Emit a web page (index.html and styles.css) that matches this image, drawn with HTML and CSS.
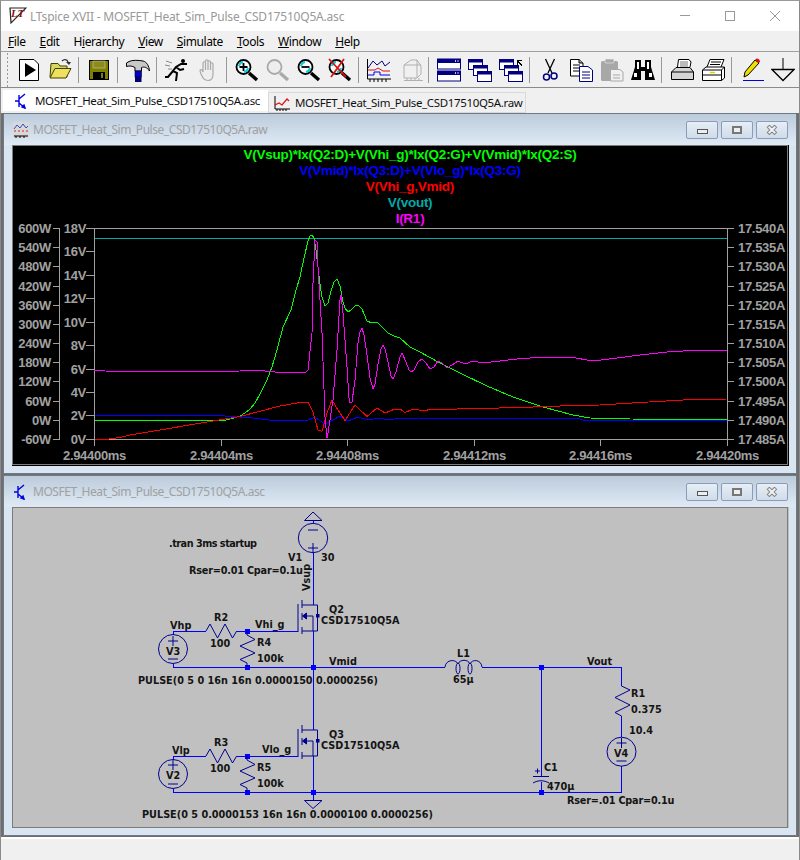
FILE: index.html
```html
<!DOCTYPE html>
<html lang="en">

    <head>
        <meta charset="UTF-8">
        <meta name="viewport" content="width=device-width, initial-scale=1.0">
        <title>LTspice XVII</title>
        <link rel="stylesheet" href="styles.css">
    </head>

    <body>
        <svg class="defs" width="0" height="0">
            <defs>
                <g id="ico-trans" fill="none" stroke="#0000e0" stroke-width="1.4">
                    <path d="M5 2V14M1 8H5M5 6L11 1M5 10L11 15"/>
                    <path d="M11 15L8 14L10 12Z" fill="#0000e0"/>
                </g>
                <g id="ico-wave">
                    <rect x="0" y="0" width="16" height="16" fill="#d8d8d8"/>
                    <path d="M1 7L4 3L7 6L10 2L13 6L15 4" fill="none" stroke="#3050c0"/>
                    <path d="M1 9H15" stroke="#e02020" stroke-dasharray="2 2"/>
                    <path d="M1 14H15M3 14V16M7 14V16M11 14V16" stroke="#000"/>
                </g>
                <g id="glass">
                    <path d="M14 15L22 22" stroke="#000" stroke-width="3.4" fill="none"/>
                    <circle cx="8.5" cy="9" r="7" fill="#fff" stroke="#000" stroke-width="1.8"/>
                    <path d="M4 8A5 5 0 0 1 8 4" stroke="#00d0e0" stroke-width="2" fill="none"/>
                    <path d="M13 10A5 5 0 0 1 9 14" stroke="#00d0e0" stroke-width="2" fill="none"/>
                </g>
                <g id="mini-win">
                    <rect x="0.5" y="0.5" width="14" height="10" fill="#fff" stroke="#000080"/>
                    <rect x="0.5" y="0.5" width="14" height="3" fill="#000080"/>
                </g>
                <g id="nmos" fill="none" stroke="#000090">
                    <path d="M298 604V632"/>
                    <path d="M302 600V608M302 613V620M302 627V634"/>
                    <path d="M302 605H317.5V631H302"/>
                    <path d="M306 616H313V631"/>
                    <path d="M302.5 616L306.5 613V619Z" fill="#000090"/>
                    <rect x="316.5" y="614.5" width="2.5" height="2.5" fill="#000090"/>
                </g>
                <path id="res-h" d="M206 631L210 624L217.500 638L225 624L232.500 638L236.700 631"/>
                <path id="res-v" d="M247 631V635L255 639.500L240 646L255 653L240 659.500L247 663V667"/>
            </defs>
        </svg>

        <div class="app">
            <div class="titlebar">
                <svg class="app-logo" width="18" height="18" viewBox="0 0 18 18">
                    <path d="M1 1L17 1L2 16Z" fill="#fff" stroke="#222" stroke-width="1.2"/>
                    <text class="logo-text" x="2" y="10">LT</text>
                </svg>
                <span class="app-title">LTspice XVII - MOSFET_Heat_Sim_Pulse_CSD17510Q5A.asc</span>
                <div class="win-ctrl">
                    <svg width="12" height="12" viewBox="0 0 12 12"><path d="M1 5.500H11" stroke="#999"/></svg>
                    <svg width="12" height="12" viewBox="0 0 12 12"><rect x="1.500" y="1.500" width="9" height="9" fill="none" stroke="#999"/></svg>
                    <svg width="12" height="12" viewBox="0 0 12 12"><path d="M1 1L11 11M11 1L1 11" stroke="#999"/></svg>
                </div>
            </div>

            <nav class="menubar">
                <span><u>F</u>ile</span>
                <span><u>E</u>dit</span>
                <span>H<u>i</u>erarchy</span>
                <span><u>V</u>iew</span>
                <span><u>S</u>imulate</span>
                <span><u>T</u>ools</span>
                <span><u>W</u>indow</span>
                <span><u>H</u>elp</span>
            </nav>

            <div class="toolbar">
                <div class="tool-group">
                    <!-- run file -->
                    <svg class="tool" viewBox="0 0 24 24">
                        <path d="M2.500 1.500H17L21.500 6V22.500H2.500Z" fill="#fff" stroke="#000"/>
                        <path d="M8 5L19 12L8 19Z" fill="#000"/>
                    </svg>
                    <!-- open -->
                    <svg class="tool" viewBox="0 0 24 24">
                        <path d="M3 5.500H10L12 8H19V19H2Z" fill="#d8d860" stroke="#404000"/>
                        <path d="M2 20L7 10.500H23L18 20Z" fill="#f0e060" stroke="#404000"/>
                        <path d="M14 3C16 1 19 1 20 4" fill="none" stroke="#333" stroke-width="1.400"/>
                        <path d="M18 4H23L21 7Z" fill="#333"/>
                    </svg>
                </div>
                <i class="sep"></i>
                <div class="tool-group">
                    <!-- save -->
                    <svg class="tool" viewBox="0 0 24 24">
                        <rect x="2.500" y="2.500" width="19" height="19" fill="#808000" stroke="#000"/>
                        <rect x="6" y="3" width="12" height="7" fill="#8c8c1e" stroke="#c8c8a0" stroke-width="0.600"/>
                        <rect x="6" y="14" width="12" height="7" fill="#000"/>
                        <rect x="14" y="15" width="2" height="5" fill="#808000"/>
                    </svg>
                </div>
                <i class="sep"></i>
                <div class="tool-group">
                    <!-- hammer -->
                    <svg class="tool" viewBox="0 0 24 24">
                        <path d="M0.500 5L3 3.500C6 2 12 2 17 3C21 4 23 8 23.500 13C21 9 18 8.500 15.500 9.500V13H9V9.500C6 8 4 7.500 0.500 8.500Z" fill="#c8c8c8" stroke="#000"/>
                        <rect x="9" y="13" width="6.500" height="6" fill="#0000d0" stroke="#000" stroke-width="0.600"/>
                        <rect x="9" y="19" width="6.500" height="5" fill="#000070"/>
                    </svg>
                </div>
                <i class="sep"></i>
                <div class="tool-group">
                    <!-- run -->
                    <svg class="tool" viewBox="0 0 24 24">
                        <path d="M1 3L7 5M0 7L5 8M3 11L7 11" stroke="#888" fill="none"/>
                        <circle cx="18" cy="3" r="2" fill="#000"/>
                        <path d="M22 6L16 6L11 9L8 13L12 15L11 23M11 9L15 12L19 11M8 13L3 19H0" fill="none" stroke="#000" stroke-width="2"/>
                    </svg>
                    <!-- halt, greyed out -->
                    <svg class="tool" viewBox="0 0 24 24">
                        <path d="M7 14V5A1.200 1.200 0 0 1 9.500 5V12M9.500 4V3A1.200 1.200 0 0 1 12 3V12M12 4A1.200 1.200 0 0 1 14.500 4V12M14.500 6A1.200 1.200 0 0 1 17 6V16C17 20 15 22.500 12 22.500C8 22.500 7 20 5 16L4 13C4 11 6 11 7 14" fill="#eee" stroke="#aaa" stroke-width="1.200"/>
                    </svg>
                </div>
                <i class="sep"></i>
                <div class="tool-group">
                    <!-- zoom in -->
                    <svg class="tool" viewBox="0 0 24 24">
                        <use href="#glass"/>
                        <path d="M4.500 9H12.500M8.500 5V13" stroke="#000" stroke-width="1.800"/>
                    </svg>
                    <!-- zoom greyed -->
                    <svg class="tool tool-off" viewBox="0 0 24 24">
                        <path d="M14 15L22 22" stroke="#aaa" stroke-width="3.400"/>
                        <circle cx="8.500" cy="9" r="7" fill="#eee" stroke="#aaa" stroke-width="1.800"/>
                    </svg>
                    <!-- zoom out -->
                    <svg class="tool" viewBox="0 0 24 24">
                        <use href="#glass"/>
                        <path d="M4.500 9H12.500" stroke="#000" stroke-width="1.800"/>
                    </svg>
                    <!-- zoom cancel -->
                    <svg class="tool" viewBox="0 0 24 24">
                        <use href="#glass"/>
                        <path d="M1 1L18 19M16 1L3 19" stroke="#e01010" stroke-width="1.800"/>
                    </svg>
                </div>
                <i class="sep"></i>
                <div class="tool-group">
                    <!-- waveform -->
                    <svg class="tool" viewBox="0 0 24 24">
                        <path d="M0.500 1V21H24M3 21V24M7 21V24M11 21V24M15 21V24M19 21V24" fill="none" stroke="#000"/>
                        <path d="M1 10L6 3L10 7L15 3L18 8L23 4" fill="none" stroke="#000080"/>
                        <path d="M1 12H8L11 10L16 13H23" fill="none" stroke="#e01010"/>
                        <path d="M1 17H7V14H13V17H23" fill="none" stroke="#0000e0"/>
                    </svg>
                    <!-- 3d box greyed -->
                    <svg class="tool tool-shift" viewBox="0 0 24 24">
                        <path d="M3 7L10 2H16L20 8V16L16 20H3ZM16 2V20M3 7H20" fill="#f0f0f0" stroke="#b0b0b0"/>
                        <path d="M3 22.500H22M6 20V23M10 20V23M14 20V23M18 20V23" fill="none" stroke="#b0b0b0"/>
                    </svg>
                </div>
                <i class="sep"></i>
                <div class="tool-group">
                    <!-- tile -->
                    <svg class="tool" viewBox="0 0 24 24">
                        <rect x="0.500" y="1" width="23" height="10" fill="#fff" stroke="#000080"/>
                        <rect x="0.500" y="1" width="23" height="4" fill="#000080"/>
                        <rect x="0.500" y="13" width="23" height="10" fill="#fff" stroke="#000080"/>
                        <rect x="0.500" y="13" width="23" height="4" fill="#000080"/>
                        <path d="M18 3H19M20.500 3H21.500M18 15H19M20.500 15H21.500" stroke="#fff" stroke-width="1.500"/>
                    </svg>
                    <!-- cascade -->
                    <svg class="tool" viewBox="0 0 24 24">
                        <use href="#mini-win" x="0" y="1"/>
                        <use href="#mini-win" x="5" y="7"/>
                        <use href="#mini-win" x="9" y="13"/>
                    </svg>
                    <!-- cascade, arrow -->
                    <svg class="tool" viewBox="0 0 24 24">
                        <use href="#mini-win" x="0" y="1"/>
                        <use href="#mini-win" x="5" y="7"/>
                        <use href="#mini-win" x="9" y="13"/>
                        <path d="M18 2H23V3H20V4H21V5H22V6H23V8H22V7H21V6H20V5H19V8H18Z" fill="#000"/>
                    </svg>
                </div>
                <i class="sep"></i>
                <div class="tool-group">
                    <!-- cut -->
                    <svg class="tool" viewBox="0 0 24 24">
                        <path d="M7.500 1L14 15M16.500 1L10 15" stroke="#000" stroke-width="1.300" fill="none"/>
                        <circle cx="8.500" cy="19" r="3" fill="none" stroke="#000080" stroke-width="1.500"/>
                        <circle cx="16" cy="18" r="3" fill="none" stroke="#000080" stroke-width="1.500"/>
                    </svg>
                    <!-- copy -->
                    <svg class="tool" viewBox="0 0 24 24">
                        <path d="M1.500 1.500H10L14 5V18H1.500Z" fill="#fff" stroke="#000"/>
                        <path d="M10 1.500V5H14" fill="#aaa" stroke="#000"/>
                        <path d="M4 7H11M4 10H11M4 13H11" stroke="#000"/>
                        <path d="M10.500 8.500H19L23.500 12V23.500H10.500Z" fill="#fff" stroke="#000080"/>
                        <path d="M13 14H21M13 17H21M13 20H21" stroke="#000080"/>
                    </svg>
                    <!-- paste greyed -->
                    <svg class="tool" viewBox="0 0 24 24">
                        <rect x="1" y="3" width="17" height="20" rx="1.500" fill="#a8a8a8"/>
                        <rect x="5" y="1" width="9" height="4" rx="1" fill="#a8a8a8" stroke="#eee" stroke-width="0.600"/>
                        <path d="M10.500 11.500H20L23 14V23H10.500Z" fill="#f0f0f0" stroke="#a8a8a8"/>
                        <path d="M13 17H20M13 20H20" stroke="#a8a8a8"/>
                    </svg>
                    <!-- find -->
                    <svg class="tool" viewBox="0 0 24 24">
                        <path d="M4 2H10V9H14V2H20V9L24 22H14V13H10V22H0L4 9Z" fill="#000"/>
                        <path d="M6 4H8V11H6ZM16 4H18V11H16ZM3 15H6V19H3ZM18 15H21V19H18Z" fill="#fff"/>
                    </svg>
                </div>
                <i class="sep"></i>
                <div class="tool-group">
                    <!-- print preview -->
                    <svg class="tool" viewBox="0 0 24 24">
                        <path d="M7.500 9L8.500 1.500H19L21 4L20 9" fill="#fff" stroke="#000"/>
                        <path d="M1.500 14L6 9.500H20L23.500 14V21.500H1.500Z" fill="#d4d4d4" stroke="#000"/>
                        <path d="M10 3H18V9H10Z" fill="#bbb"/>
                        <path d="M1.500 14H23.500" stroke="#000"/>
                    </svg>
                    <!-- print -->
                    <svg class="tool" viewBox="0 0 24 24">
                        <path d="M6 9L9 1.500H23L20 9" fill="#fff" stroke="#000"/>
                        <path d="M10 4H20M9 6.500H19" stroke="#000"/>
                        <path d="M1.500 12L5 9H23.500V20L20.500 22.500H1.500Z" fill="#fff" stroke="#000"/>
                        <path d="M1.500 12H20.500V22.500M20.500 12L23.500 9M1.500 17H20.500" fill="none" stroke="#000"/>
                        <path d="M9 14.500H14" stroke="#e0d000" stroke-width="1.500"/>
                    </svg>
                </div>
                <i class="sep"></i>
                <div class="tool-group">
                    <!-- pencil -->
                    <svg class="tool" viewBox="0 0 24 24">
                        <path d="M4 19L5 14L15 2L19 5L8 17Z" fill="#f0e000" stroke="#000"/>
                        <path d="M15 2L16.500 0.500C18 0 20 2 20 3.500L19 5Z" fill="#e01010"/>
                        <path d="M3 22.500H24" stroke="#0000e0"/>
                    </svg>
                    <!-- ground -->
                    <svg class="tool" viewBox="0 0 24 24">
                        <path d="M12 0V11" stroke="#000"/>
                        <path d="M1 11.500H23L12 22.500Z" fill="none" stroke="#000" stroke-width="1.300"/>
                    </svg>
                </div>
            </div>

            <div class="tabs">
                <div class="tab tab-active">
                    <svg width="16" height="16" viewBox="0 0 16 16"><use href="#ico-trans"/></svg>
                    <span>MOSFET_Heat_Sim_Pulse_CSD17510Q5A.asc</span>
                </div>
                <div class="tab">
                    <svg width="16" height="16" viewBox="0 0 16 16">
                        <path d="M1 1V14H16M3 14V16M6 14V16M9 14V16M12 14V16" fill="none" stroke="#000"/>
                        <path d="M1 10L5 8L8 10L13 4L15 6" fill="none" stroke="#e01010" stroke-width="1.200"/>
                    </svg>
                    <span>MOSFET_Heat_Sim_Pulse_CSD17510Q5A.raw</span>
                </div>
            </div>

            <main class="mdi">
                <section class="child">
                    <header class="child-head">
                        <svg width="16" height="16" viewBox="0 0 16 16"><use href="#ico-wave"/></svg>
                        <span class="child-title">MOSFET_Heat_Sim_Pulse_CSD17510Q5A.raw</span>
                        <div class="child-btns">
                            <button class="cbtn"><i class="g-min"></i></button>
                            <button class="cbtn"><i class="g-max"></i></button>
                            <button class="cbtn cbtn-x">&#10006;</button>
                        </div>
                    </header>
                    <div class="child-body plot-body">
                        <svg class="canvas" width="776" height="320" viewBox="12 145 776 320">
                            <g class="trace-heads">
                                <text class="t-green" x="410" y="159">V(Vsup)*Ix(Q2:D)+V(Vhi_g)*Ix(Q2:G)+V(Vmid)*Ix(Q2:S)</text>
                                <text class="t-blue" x="410" y="175">V(Vmid)*Ix(Q3:D)+V(Vlo_g)*Ix(Q3:G)</text>
                                <text class="t-red" x="410" y="191">V(Vhi_g,Vmid)</text>
                                <text class="t-teal" x="410" y="207">V(vout)</text>
                                <text class="t-magenta" x="410" y="223">I(R1)</text>
                            </g>

                            <path class="axis" d="M94.500 228H727.500V439.500H94.500Z"/>
                            <path class="axis" d="M59.500 228V439.500M53 228H59.500M53 247.500H59.500M53 266.500H59.500M53 286.500H59.500M53 305.500H59.500M53 324.500H59.500M53 343.500H59.500M53 362.500H59.500M53 381.500H59.500M53 401.500H59.500M53 420.500H59.500M53 439.500H59.500"/>
                            <path class="axis" d="M86 228H94M86 251.500H94M86 275.500H94M86 298.500H94M86 322.500H94M86 345.500H94M86 369.500H94M86 392.500H94M86 415.500H94M86 439.500H94"/>
                            <path class="axis" d="M727 247.500H734M727 228H734M727 266.500H734M727 286.500H734M727 305.500H734M727 324.500H734M727 343.500H734M727 362.500H734M727 381.500H734M727 401.500H734M727 420.500H734M727 439.500H734"/>
                            <path class="axis" d="M94.500 439V446M221.500 439V446M347.500 439V446M474.500 439V446M600.500 439V446M727.500 439V446"/>

                            <g class="axis-label lbl-end">
                                <text x="51" y="233">600W</text>
                                <text x="51" y="252">540W</text>
                                <text x="51" y="271">480W</text>
                                <text x="51" y="291">420W</text>
                                <text x="51" y="310">360W</text>
                                <text x="51" y="329">300W</text>
                                <text x="51" y="348">240W</text>
                                <text x="51" y="367">180W</text>
                                <text x="51" y="386">120W</text>
                                <text x="51" y="406">60W</text>
                                <text x="51" y="425">0W</text>
                                <text x="51" y="444">-60W</text>
                                <text x="86" y="233">18V</text>
                                <text x="86" y="256">16V</text>
                                <text x="86" y="280">14V</text>
                                <text x="86" y="303">12V</text>
                                <text x="86" y="327">10V</text>
                                <text x="86" y="350">8V</text>
                                <text x="86" y="374">6V</text>
                                <text x="86" y="397">4V</text>
                                <text x="86" y="420">2V</text>
                                <text x="86" y="444">0V</text>
                            </g>
                            <g class="axis-label">
                                <text x="738" y="233">17.540A</text>
                                <text x="738" y="252">17.535A</text>
                                <text x="738" y="271">17.530A</text>
                                <text x="738" y="291">17.525A</text>
                                <text x="738" y="310">17.520A</text>
                                <text x="738" y="329">17.515A</text>
                                <text x="738" y="348">17.510A</text>
                                <text x="738" y="367">17.505A</text>
                                <text x="738" y="386">17.500A</text>
                                <text x="738" y="406">17.495A</text>
                                <text x="738" y="425">17.490A</text>
                                <text x="738" y="444">17.485A</text>
                            </g>
                            <g class="axis-label lbl-mid">
                                <text x="94.500" y="460">2.94400ms</text>
                                <text x="221.500" y="460">2.94404ms</text>
                                <text x="347.500" y="460">2.94408ms</text>
                                <text x="474.500" y="460">2.94412ms</text>
                                <text x="600.500" y="460">2.94416ms</text>
                                <text x="727.500" y="460">2.94420ms</text>
                            </g>

                            <path class="trace" stroke="#00aaaa" d="M94.500 238.500H727"/>
                            <polyline class="trace" stroke="#0000ff" points="94.500,415.500 217,415.500 240,417 253,418 273,420.500 307,420.500 315,417 320,421 325,424 333,420 340,416 348,421 358,417 368,420 380,418 388,420 400,418 407,419 418,418 440,418.500 580,419 585,420.500 727,420.500"/>
                            <polyline class="trace" stroke="#00ff00" points="94.500,420.500 224,420.500 232,418.500 240,416 245,413 250,409 255,403 260,394 267,380 272,367 277,350 283,327 291,310 296,290 300,277 304,258 308,241 310,236 312,235 314,238 316,250 318,267 320,284 322,297 325,306 328,303 331,291 334,282 337,279 340,286 343,302 345,308 348,312 351,310 355,306 358,305 362,309 367,321 372,323 377,322 382,327 388,333 394,336 400,338 410,347 420,352 440,363 460,373 487,386 513,397 543,407 573,415 590,418 630,419 727,419.500"/>
                            <polyline class="trace" stroke="#ff0000" points="94.500,439.500 105,439.500 120,437.500 130,435 240,416.500 280,406 300,402.500 308,402 313,412 318,430 322,431.500 327,413 332,400 338,410 345,420.500 355,405 367,416.500 377,408 385,413 395,409 400,409 405,412.500 413,409 425,411 430,409 443,410 457,409 520,407.500 560,406 600,405 640,402.500 683,400 727,399"/>
                            <polyline class="trace" stroke="#ff00ff" points="94.500,370.500 105,371 165,372 240,371 260,370.500 275,372 305,373 308,370 312,333 313,283 315,240 317,242 318,267 320,300 322,333 325,417 327,438 328,433 333,400 337,350 340,300 341,295 343,313 347,367 349,398 350,403 352,402 355,380 358,343 360,332 362,328 364,335 367,355 370,378 373,389 375,384 378,364 381,349 383,345 385,349 388,362 391,376 393,379 396,372 400,357 402,353 406,362 409,370 411,372 414,370 418,362 422,359 426,363 430,369 434,367 438,361 442,363 447,368 452,365 458,361 465,364 473,361 483,363 500,361 517,359 543,357 570,357 593,361 617,358 640,355 667,352 700,350 727,350"/>
                        </svg>
                    </div>
                </section>

                <section class="child">
                    <header class="child-head">
                        <svg width="16" height="16" viewBox="0 0 16 16"><use href="#ico-trans"/></svg>
                        <span class="child-title">MOSFET_Heat_Sim_Pulse_CSD17510Q5A.asc</span>
                        <div class="child-btns">
                            <button class="cbtn"><i class="g-min"></i></button>
                            <button class="cbtn"><i class="g-max"></i></button>
                            <button class="cbtn cbtn-x">&#10006;</button>
                        </div>
                    </header>
                    <div class="child-body sch-body">
                        <svg class="canvas" width="776" height="321" viewBox="12 507 776 321">
                            <!-- wires -->
                            <g class="wire">
                                <path d="M313 553V605M313 631V730M313 756V792M313 520V523"/>
                                <path d="M173 634.500V631H206M236.700 631H298"/>
                                <path d="M173 664V667H445M482 667H621.500V686"/>
                                <path d="M173 759.500V756H206M236.700 756H298"/>
                                <path d="M173 789V792H621.500V766"/>
                                <path d="M541.500 667V776M541.500 782V792"/>
                                <path d="M621.500 716V737"/>
                                <path d="M313 792V800"/>
                            </g>
                            <g class="wire-dots">
                                <rect x="245" y="629" width="5" height="5"/>
                                <rect x="245" y="665" width="5" height="5"/>
                                <rect x="311" y="665" width="5" height="5"/>
                                <rect x="245" y="754" width="5" height="5"/>
                                <rect x="245" y="790" width="5" height="5"/>
                                <rect x="311" y="790" width="5" height="5"/>
                                <rect x="539" y="665" width="5" height="5"/>
                                <rect x="539" y="790" width="5" height="5"/>
                            </g>

                            <!-- parts -->
                            <g class="part">
                                <path d="M304.500 520.500H322L313 512Z"/>
                                <circle cx="313" cy="538" r="14.700"/>
                                <path d="M308 530H318M308 548H318M313 543V553"/>

                                <use href="#nmos"/>
                                <use href="#nmos" y="125"/>

                                <use href="#res-h"/>
                                <use href="#res-h" y="125"/>
                                <use href="#res-v"/>
                                <use href="#res-v" y="125"/>

                                <circle cx="173" cy="649" r="14.500"/>
                                <path d="M168 641H178M173 636V646M168 659H178"/>
                                <circle cx="173" cy="774" r="14.500"/>
                                <path d="M168 765H178M173 760V770M168 784H178"/>
                                <circle cx="621.500" cy="751.700" r="14.500"/>
                                <path d="M616.500 743H626.500M621.500 738V748M616.500 761H626.500"/>

                                <path d="M304.500 800.500H322L313 808.500Z"/>

                                <path d="M621.500 686L630 690L615 697.500L630 705L615 712.500L621.500 716"/>

                                <path d="M445 667C446 659 456 659 458 664C460 659 468 659 470 664C472 659 481 659 482 667"/>
                                <ellipse cx="458" cy="668.500" rx="2" ry="5.500"/>
                                <ellipse cx="470" cy="668.500" rx="2" ry="5.500"/>

                                <path d="M533 776.500H549M533 783C538 780 544 780 549 783"/>
                                <path d="M535 771H540M537.500 768.500V773.500"/>
                            </g>

                            <!-- labels -->
                            <g class="sch-text">
                                <text class="tighter" x="169" y="547">.tran 3ms startup</text>
                                <text x="288" y="561">V1</text>
                                <text x="321" y="561">30</text>
                                <text class="tight" x="189" y="574">Rser=0.01 Cpar=0.1u</text>
                                <text transform="translate(310 591) rotate(-90)">Vsup</text>
                                <text x="329" y="613">Q2</text>
                                <text x="321" y="624">CSD17510Q5A</text>
                                <text x="170" y="629">Vhp</text>
                                <text x="214" y="621">R2</text>
                                <text x="210" y="647">100</text>
                                <text x="255" y="628">Vhi_g</text>
                                <text x="257" y="646">R4</text>
                                <text x="257" y="662">100k</text>
                                <text x="329" y="665">Vmid</text>
                                <text x="166" y="655">V3</text>
                                <text x="138" y="684">PULSE(0 5 0 16n 16n 0.0000150 0.0000256)</text>

                                <text x="329" y="738">Q3</text>
                                <text x="321" y="749">CSD17510Q5A</text>
                                <text x="172" y="754">Vlp</text>
                                <text x="214" y="746">R3</text>
                                <text x="210" y="772">100</text>
                                <text x="262" y="753">Vlo_g</text>
                                <text x="257" y="771">R5</text>
                                <text x="257" y="787">100k</text>
                                <text x="166" y="779">V2</text>
                                <text x="142" y="818">PULSE(0 5 0.0000153 16n 16n 0.0000100 0.0000256)</text>

                                <text x="457" y="657">L1</text>
                                <text x="453" y="683">65&#181;</text>
                                <text x="587" y="665">Vout</text>
                                <text x="631" y="697">R1</text>
                                <text x="631" y="713">0.375</text>
                                <text x="629" y="734">10.4</text>
                                <text x="614" y="757">V4</text>
                                <text x="544" y="771">C1</text>
                                <text x="547" y="790">470&#181;</text>
                                <text class="tight" x="567" y="804">Rser=.01 Cpar=0.1u</text>
                            </g>
                        </svg>
                    </div>
                </section>
            </main>

            <footer class="statusbar"></footer>
        </div>
    </body>

</html>
```

FILE: styles.css
```css
* {
    box-sizing: border-box;
}

html,
body {
    margin: 0;
    padding: 0;
    height: 100%;
    overflow: hidden;
}

body {
    font-family: "Noto Sans", "Open Sans", sans-serif;
    font-size: 12px;
    background-color: #f0f0f0;
}

.defs {
    position: absolute;
}

.app {
    display: flex;
    flex-direction: column;
    width: 800px;
    height: 860px;
    border-top: 1px solid #9a9a9a;
    border-left: 1px solid #8a8a8a;
    border-right: 1px solid #8a8a8a;
}

/* title bar */
.titlebar {
    display: flex;
    align-items: center;
    height: 30px;
    padding-left: 8px;
    background-color: #fff;
}

.app-logo {
    flex: none;
}

.logo-text {
    font-family: "Liberation Serif", serif;
    font-size: 11px;
    font-weight: bold;
    font-style: italic;
    fill: #8c1010;
}

.app-title {
    margin-left: 3px;
    color: #999;
    letter-spacing: -0.2px;
}

.win-ctrl {
    display: flex;
    gap: 33px;
    margin-left: auto;
    padding-right: 18px;
}

/* menu */
.menubar {
    display: flex;
    align-items: center;
    gap: 14px;
    height: 21px;
    padding-left: 7px;
    color: #000;
    letter-spacing: -0.4px;
    border-bottom: 1px solid #a0a0a0;
}

/* toolbar */
.toolbar {
    display: flex;
    align-items: center;
    height: 36px;
    padding-left: 16px;
    border-bottom: 1px solid #8a8a8a;
    background-image: radial-gradient(#999 40%, transparent 45%);
    background-size: 3px 4px;
    background-repeat: repeat-y;
    background-position: 5px 0;
}

.tool-group {
    display: flex;
    gap: 7px;
}

.tool {
    display: block;
    width: 24px;
    height: 24px;
}

.tool-shift {
    margin-left: 3px;
    margin-right: -3px;
}

.sep {
    display: block;
    width: 1px;
    height: 26px;
    margin: 0 8px 0 6px;
    background-color: #999;
}

/* tabs */
.tabs {
    display: flex;
    height: 25px;
    padding: 2px 0 0 2px;
    background-color: #f0f0f0;
}

.tab {
    display: flex;
    align-items: center;
    gap: 5px;
    height: 21px;
    padding: 0 3px 0 5px;
    margin-top: 2px;
    background-color: #f0f0f0;
    border: 1px solid #d9d9d9;
    font-size: 11.5px;
    letter-spacing: -0.35px;
    color: #111;
}

.tab svg {
    flex: none;
}

.tab-active {
    margin-top: 0;
    padding-left: 10px;
    padding-right: 7px;
    background-color: #fff;
    border-color: #fff;
}

/* MDI area */
.mdi {
    display: flex;
    flex-direction: column;
    flex: 1;
    gap: 1px;
    padding: 0 2px 0 2px;
    background-color: #6e6e6e;
}

.child {
    display: flex;
    flex-direction: column;
    height: 361px;
    background-color: #d9e5f1;
    border: 1px solid #6e7a88;
    border-radius: 3px 3px 0 0;
}

.child-head {
    display: flex;
    align-items: center;
    flex: none;
    height: 31px;
    padding-left: 9px;
    background: linear-gradient(#bccbdb, #dfeaf5);
}

.child-title {
    margin-left: 4px;
    color: #a0a0a0;
    letter-spacing: -0.45px;
}

.child-btns {
    display: flex;
    gap: 3px;
    margin-left: auto;
    margin-right: 8px;
}

.cbtn {
    display: flex;
    align-items: center;
    justify-content: center;
    width: 32px;
    height: 18px;
    padding: 0;
    background: linear-gradient(#e6eef6, #cfdce9);
    border: 1px solid #8c9cb8;
    border-radius: 2px;
}

.cbtn-x {
    color: #f2f2f2;
    font-size: 14px;
    line-height: 1;
    -webkit-text-stroke: 0.7px #666;
}

.g-min {
    display: block;
    width: 11px;
    height: 5px;
    margin-top: 4px;
    background-color: #eee;
    border: 1px solid #555;
}

.g-max {
    display: block;
    width: 10px;
    height: 8px;
    background-color: #eee;
    border: 2px solid #777;
}

.child-body {
    margin: 0 7px 0 8px;
    height: 321px;
    line-height: 0;
}

.plot-body {
    background-color: #000;
}

.sch-body {
    background-color: #c0c0c0;
}

.canvas {
    display: block;
    shape-rendering: crispEdges;
    outline: 1px solid #7c7c7c;
    outline-offset: -1px;
}

/* plot */
.trace-heads text {
    font-family: "Liberation Sans", sans-serif;
    font-size: 13.5px;
    font-weight: bold;
    text-anchor: middle;
    letter-spacing: -0.25px;
}

.t-green {
    fill: #00ff00;
}

.t-blue {
    fill: #0000ff;
}

.t-red {
    fill: #ff0000;
}

.t-teal {
    fill: #00aaaa;
}

.t-magenta {
    fill: #ff00ff;
}

.axis {
    fill: none;
    stroke: #a0a0a0;
    stroke-width: 1;
}

.axis-label text {
    font-family: "Liberation Sans", sans-serif;
    font-size: 13px;
    font-weight: bold;
    fill: #a0a0a0;
    letter-spacing: -0.3px;
}

.lbl-end text {
    text-anchor: end;
}

.lbl-mid text {
    text-anchor: middle;
}

.trace {
    fill: none;
    stroke-width: 1;
}

/* schematic */
.wire {
    fill: none;
    stroke: #0000ff;
    stroke-width: 1;
}

.wire-dots rect {
    fill: #0000ff;
}

.part {
    fill: none;
    stroke: #000090;
    stroke-width: 1;
    shape-rendering: geometricPrecision;
}

.sch-text text {
    font-family: "DejaVu Sans", sans-serif;
    font-size: 9.7px;
    font-weight: bold;
    fill: #141414;
}

.sch-text .tight {
    letter-spacing: -0.2px;
}

.sch-text .tighter {
    letter-spacing: -0.5px;
}

/* status bar */
.statusbar {
    flex: none;
    height: 23px;
    margin-top: 0;
    background-color: #f0f0f0;
    border-top: 2px solid #fff;
}
```
